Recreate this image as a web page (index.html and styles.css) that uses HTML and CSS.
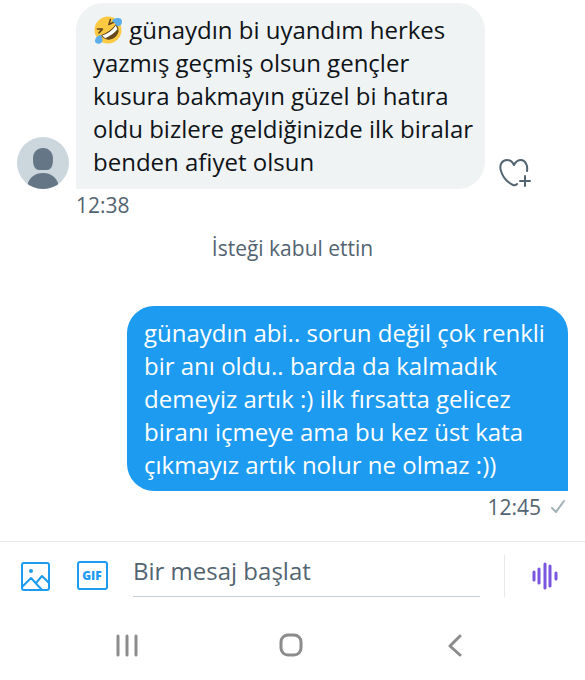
FILE: index.html
```html
<!DOCTYPE html>
<html lang="tr">

<head>
    <meta charset="utf-8">
    <meta name="viewport" content="width=device-width, initial-scale=1.0">
    <title>Mesajlar</title>
    <link rel="stylesheet" href="styles.css">
</head>

<body>
    <main class="chat">
        <!-- incoming message -->
        <article class="incoming">
            <svg class="avatar" viewBox="0 0 52 52" role="img" aria-label="Profil">
                <clipPath id="round"><circle cx="26" cy="26" r="26" /></clipPath>
                <g clip-path="url(#round)">
                    <rect width="52" height="52" fill="#cbd6dd" />
                    <path fill="#657786" d="M26 11c6 0 10 4 10 11 0 7-2 11-6 11h-8c-4 0-6-4-6-11 0-7 4-11 10-11zM10 52c0-10 7-16 16-16s16 6 16 16z" />
                </g>
            </svg>
            <p class="bubble grey"><svg class="emoji" viewBox="0 0 28 28" role="img" aria-label="🤣">
                    <circle cx="14" cy="14" r="13.5" fill="#fcc943" />
                    <g transform="rotate(-36 14 14)">
                        <path fill="#65471b" d="M5 14q9 3 19 0c0 7-4 10-9 10S5 21 5 14z" />
                        <path fill="#fff" d="M6 15q8 3 17 0l-1 4q-7 2-15 0z" />
                        <path fill="none" stroke="#65471b" stroke-width="1.6" stroke-linecap="round" stroke-linejoin="round" d="M6 7l4 3-5 1M22 7l-4 3 5 1" />
                    </g>
                    <path fill="#5dadec" d="M18 5c1-3 7-4 9-2s1 6-2 7-4-4-7-5zM7 19c-3 0-6 3-6 6s5 4 7 1c1-2 0-5-1-7z" />
                </svg> günaydın bi uyandım herkes<br>
                yazmış geçmiş olsun gençler<br>
                kusura bakmayın güzel bi hatıra<br>
                oldu bizlere geldiğinizde ilk biralar<br>
                benden afiyet olsun</p>
            <button class="like" type="button" aria-label="Tepki ekle">
                <svg viewBox="0 0 32 32" width="32" height="32">
                    <path d="M28 14c1-6-2-11-6-11s-6 3-7 5c-1-2-3-5-7-5-5 0-8 5-6 11 2 7 8 12 12 14 2 1 3 0 4-1M26 19v10M21 24h10" />
                </svg>
            </button>
        </article>
        <time class="time time-in">12:38</time>

        <p class="notice">İsteği kabul ettin</p>

        <!-- outgoing message -->
        <article class="outgoing">
            <p class="bubble blue">günaydın abi.. sorun değil çok renkli<br>
                bir anı oldu.. barda da kalmadık<br>
                demeyiz artık :) ilk fırsatta gelicez<br>
                biranı içmeye ama bu kez üst kata<br>
                çıkmayız artık nolur ne olmaz :))</p>
        </article>
        <div class="time time-out">
            <time>12:45</time>
            <svg viewBox="0 0 16 16" width="16" height="16">
                <path d="M2 9l4 4 8-11" />
            </svg>
        </div>
    </main>

    <form class="composer">
        <button class="tool" type="button" aria-label="Fotoğraf">
            <svg viewBox="0 0 32 32" width="32" height="32">
                <rect x="3" y="3" width="27" height="27" rx="2" />
                <path d="M3 27l9-9 11 12M17 23l6-7 7 7" />
                <circle class="dot" cx="12" cy="11" r="2" />
            </svg>
        </button>
        <button class="tool gif" type="button"><span>GIF</span></button>
        <input class="message" type="text" placeholder="Bir mesaj başlat" aria-label="Bir mesaj başlat">
        <button class="voice" type="button" aria-label="Sesli mesaj">
            <svg viewBox="0 0 28 28" width="28" height="28">
                <path d="M3 10v8M8 7v14M14 2v24M19 4v20M25 11v6" />
            </svg>
        </button>
    </form>

    <!-- phone navigation bar -->
    <nav class="system">
        <button type="button" aria-label="Son uygulamalar">
            <svg viewBox="0 0 24 24" width="24" height="24">
                <path d="M3 3v19M12 3v19M21 3v19" />
            </svg>
        </button>
        <button type="button" aria-label="Ana ekran">
            <svg viewBox="0 0 24 24" width="24" height="24">
                <rect x="2" y="2" width="20" height="20" rx="7" />
            </svg>
        </button>
        <button type="button" aria-label="Geri">
            <svg viewBox="0 0 24 24" width="24" height="24">
                <path d="M17 3L7 13l10 9" />
            </svg>
        </button>
    </nav>
</body>

</html>
```

FILE: styles.css
```css
* {
    box-sizing: border-box;
}

body {
    margin: 0;
    background-color: #ffffff;
    color: #0f1419;
    font-family: "Open Sans", sans-serif;
}

p {
    margin: 0;
}

button {
    display: flex;
    align-items: center;
    justify-content: center;
    padding: 0;
    border: none;
    background: none;
}

svg {
    fill: none;
    stroke-linecap: round;
    stroke-linejoin: round;
}

.chat {
    padding: 3px 17px 0;
}

.incoming {
    display: flex;
    align-items: flex-end;
    padding-right: 37px;
}

.avatar {
    flex: none;
    width: 52px;
    height: 52px;
    margin-right: 7px;
}

.bubble {
    padding: 10px 17px;
    font-size: 24px;
    line-height: 33px;
    white-space: nowrap;
}

.grey {
    flex: 1;
    min-width: 0;
    padding-bottom: 11px;
    background-color: #eff3f4;
    border-radius: 27px 27px 27px 0;
}

.emoji {
    width: 30px;
    height: 28px;
    vertical-align: -5px;
}

.like {
    margin-left: 14px;
}

.like svg {
    stroke: #536471;
    stroke-width: 2;
}

.time {
    color: #536471;
    font-size: 21px;
    line-height: 32px;
}

.time-in {
    display: block;
    padding-left: 59px;
}

.notice {
    padding: 11px 0 42px;
    color: #536471;
    font-size: 21px;
    line-height: 32px;
    text-align: center;
}

.outgoing {
    padding-left: 110px;
}

.blue {
    background-color: #1d9bf0;
    border-radius: 27px 27px 0 27px;
    color: #ffffff;
}

.time-out {
    display: flex;
    align-items: center;
    justify-content: flex-end;
    gap: 9px;
    padding-right: 2px;
}

.time-out svg {
    stroke: #a3b0b8;
    stroke-width: 2;
}

.composer {
    display: flex;
    align-items: center;
    height: 70px;
    margin-top: 18px;
    padding: 0 0 2px 19px;
    border-top: 1px solid #e6e9ea;
}

.tool {
    width: 32px;
    height: 32px;
    margin-right: 25px;
}

.tool svg {
    stroke: #1d9bf0;
    stroke-width: 2;
}

.tool .dot {
    fill: #1d9bf0;
    stroke: none;
}

.gif span {
    width: 31px;
    border: 2px solid #1d9bf0;
    border-radius: 3px;
    color: #1d9bf0;
    font: 800 12px/25px "Open Sans", sans-serif;
}

.message {
    flex: 1;
    min-width: 0;
    height: 42px;
    padding: 0 0 10px;
    border: none;
    border-bottom: 1px solid #c3cdd3;
    background: none;
    color: #0f1419;
    font: 24px "Open Sans", sans-serif;
}

.message::placeholder {
    color: #536471;
    opacity: 1;
}

.voice {
    width: 81px;
    height: 42px;
    margin-left: 24px;
    border-left: 1px solid #e6e9ea;
}

.voice svg {
    stroke: #7856df;
    stroke-width: 3;
}

.system {
    display: flex;
    justify-content: center;
    gap: 140px;
    padding: 22px 4px 22px 0;
}

.system svg {
    stroke: #8c8c8c;
    stroke-width: 3;
}
```
